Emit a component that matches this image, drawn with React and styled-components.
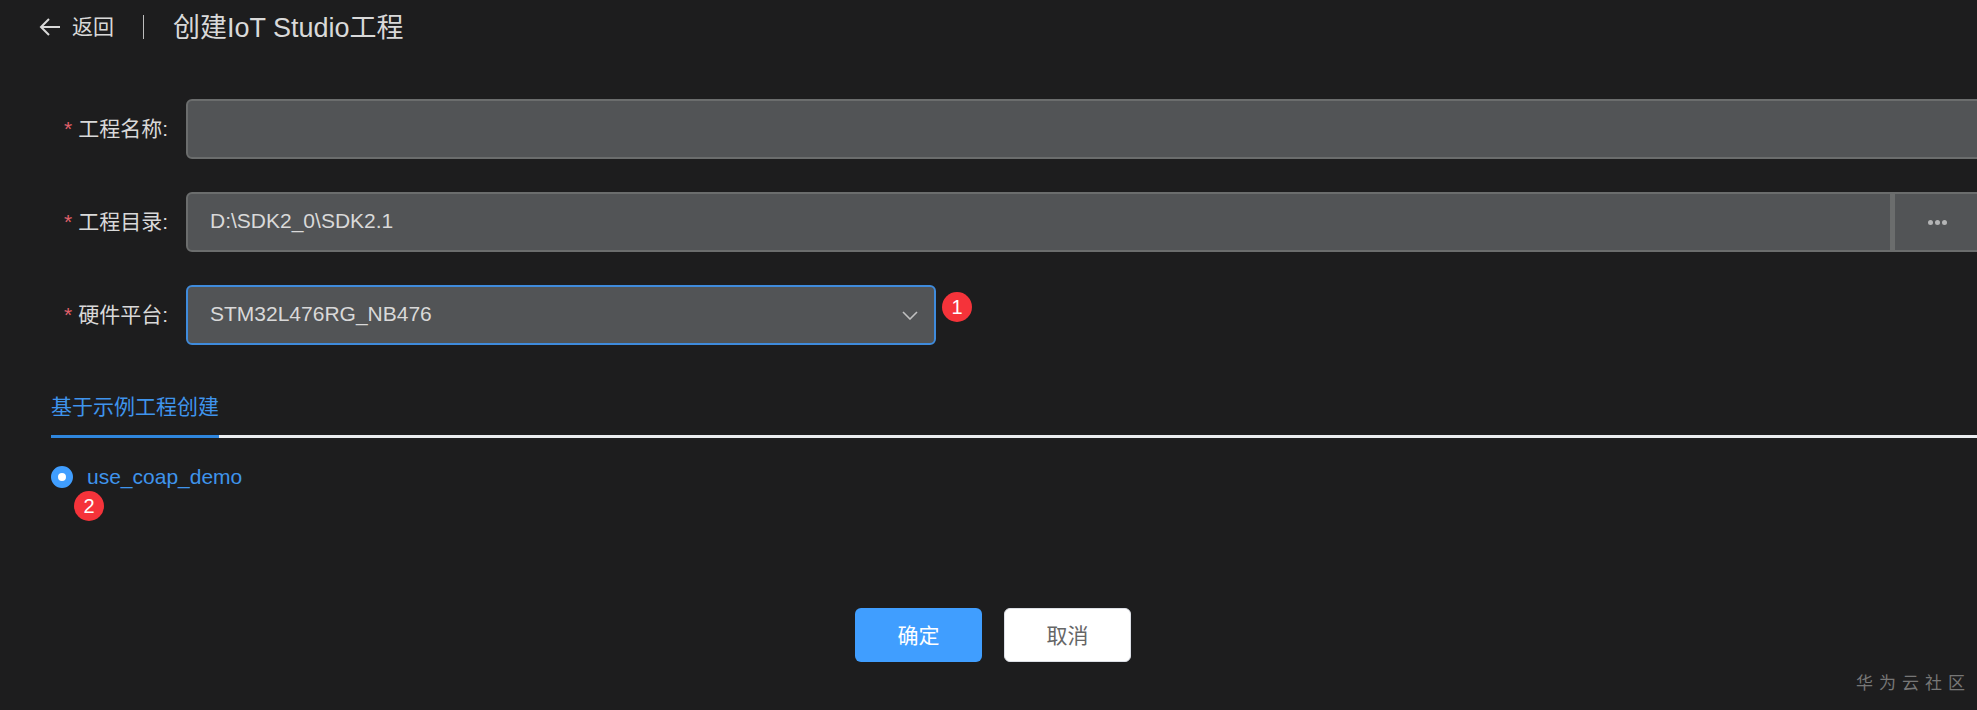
import React from 'react'
import styled, { createGlobalStyle } from 'styled-components'

const COLOR = {
    bg: '#1d1d1e',
    text: '#d9d9d9',
    field: '#525456',
    border: '#6b6d6d',
    main: '#409eff',
    link: '#3f94ec',
    focus: '#3f8bdc',
    red: '#f5333a',
}

const GlobalStyle = createGlobalStyle`
    html, body {
        margin: 0;
        padding: 0;
        background-color: ${COLOR.bg};
    }
`

const Page = styled.div`
    position: relative;
    width: 1977px;
    height: 710px;
    overflow: hidden;
    background-color: ${COLOR.bg};
    font-family: "Liberation Sans", "Noto Sans CJK SC", sans-serif;
    color: ${COLOR.text};
`

const Header = styled.div`
    display: flex;
    align-items: center;
    height: 54px;
    padding-left: 39px;
`
const Back = styled.div`
    display: flex;
    align-items: center;
    gap: 11px;
    font-size: 21px;
    line-height: 26px;
`
const Divider = styled.div`
    width: 1px;
    height: 24px;
    margin: 0 29px;
    background-color: #bdbdbd;
`
const Title = styled.div`
    padding-bottom: 3px;
    font-size: 27px;
`

const Form = styled.div`
    display: flex;
    flex-direction: column;
    gap: 33px;
    margin-top: 45px;
`
const Row = styled.div`
    display: flex;
    align-items: center;
`
const Label = styled.div`
    width: 168px;
    flex-shrink: 0;
    margin-right: 18px;
    padding-bottom: 5px;
    text-align: right;
    font-size: 21px;
    white-space: nowrap;
`
const Star = styled.span`
    margin-right: 6px;
    color: #e0606a;
`
const Field = styled.div`
    box-sizing: border-box;
    display: flex;
    align-items: center;
    justify-content: space-between;
    flex-shrink: 0;
    height: 60px;
    width: ${props => props.width}px;
    padding: 0 22px 2px;
    border: ${props => props.focused ? `2px solid ${COLOR.focus}` : `2px solid ${COLOR.border}`};
    border-radius: ${props => props.joined ? '6px 0 0 6px' : '6px'};
    background-color: ${COLOR.field};
    font-size: 21px;
    color: ${COLOR.text};
`
const Browse = styled.div`
    box-sizing: border-box;
    display: flex;
    align-items: center;
    justify-content: center;
    flex-shrink: 0;
    width: 90px;
    height: 60px;
    border: 2px solid ${COLOR.border};
    border-left-width: 3px;
    background-color: ${COLOR.field};
`
const Dot = styled.span`
    width: 5px;
    height: 5px;
    margin: 0 1px;
    border-radius: 50%;
    background-color: #b4b5b6;
`

const Tabs = styled.div`
    margin: 44px 0 0 51px;
`
const TabBar = styled.div`
    height: 46px;
    border-bottom: 3px solid #ebedf0;
`
const Tab = styled.div`
    box-sizing: border-box;
    display: inline-block;
    height: 49px;
    line-height: 36px;
    border-bottom: 3px solid #2f86dd;
    font-size: 21px;
    color: ${COLOR.link};
`
const Option = styled.div`
    display: flex;
    align-items: center;
    gap: 14px;
    height: 24px;
    margin-top: 27px;
    font-size: 21px;
    line-height: 24px;
    color: ${COLOR.link};
`
const RadioMark = styled.span`
    box-sizing: border-box;
    display: block;
    width: 22px;
    height: 22px;
    border: 7.5px solid ${COLOR.main};
    border-radius: 50%;
    background-color: #fff;
`

const Footer = styled.div`
    display: flex;
    justify-content: center;
    gap: 22px;
    margin-top: 119px;
    padding-left: 9px;
`
const Button = styled.div`
    box-sizing: border-box;
    display: flex;
    align-items: center;
    justify-content: center;
    width: 127px;
    height: 54px;
    padding-bottom: 2px;
    border-radius: 6px;
    font-size: 21px;
    background-color: ${props => props.primary ? COLOR.main : '#fff'};
    color: ${props => props.primary ? '#fff' : '#666'};
    border: ${props => props.primary ? 'none' : '1px solid #dcdfe6'};
`

const Badge = styled.div`
    position: absolute;
    left: ${props => props.x}px;
    top: ${props => props.y}px;
    display: flex;
    align-items: center;
    justify-content: center;
    width: 30px;
    height: 30px;
    border-radius: 50%;
    background-color: ${COLOR.red};
    color: #fff;
    font-size: 20px;
`
const Watermark = styled.div`
    position: absolute;
    right: 12px;
    bottom: 16px;
    margin-right: -6px;
    font-size: 17px;
    letter-spacing: 6px;
    color: #777;
`

function ArrowLeft () {
    return (
        <svg width="22" height="22" viewBox="0 0 22 22" fill="none" stroke="#d9d9d9" strokeWidth="2">
            <path d="M21 11H2M10 3l-8 8 8 8"/>
        </svg>
    )
}

function ChevronDown () {
    return (
        <svg width="16" height="9" viewBox="0 0 16 9" fill="none" stroke="#c0c0c0" strokeWidth="1.6" style={{marginRight: -6, marginTop: 2}}>
            <path d="M1 1l7 7 7-7"/>
        </svg>
    )
}

function FormRow ({label, children}) {
    return (
        <Row>
            <Label><Star>*</Star>{label}:</Label>
            {children}
        </Row>
    )
}

function App () {
    return (
        <Page>
            <GlobalStyle/>
            <Header>
                <Back><ArrowLeft/>返回</Back>
                <Divider/>
                <Title>创建IoT Studio工程</Title>
            </Header>
            <Form>
                <FormRow label="工程名称">
                    <Field width={1830}/>
                </FormRow>
                <FormRow label="工程目录">
                    <Field width={1706} joined>D:\SDK2_0\SDK2.1</Field>
                    <Browse><Dot/><Dot/><Dot/></Browse>
                </FormRow>
                <FormRow label="硬件平台">
                    <Field width={750} focused>
                        STM32L476RG_NB476
                        <ChevronDown/>
                    </Field>
                </FormRow>
            </Form>
            <Tabs>
                <TabBar><Tab>基于示例工程创建</Tab></TabBar>
                <Option><RadioMark/>use_coap_demo</Option>
            </Tabs>
            <Footer>
                <Button primary>确定</Button>
                <Button>取消</Button>
            </Footer>
            <Badge x={942} y={292}>1</Badge>
            <Badge x={74} y={491}>2</Badge>
            <Watermark>华为云社区</Watermark>
        </Page>
    )
}

export default App
